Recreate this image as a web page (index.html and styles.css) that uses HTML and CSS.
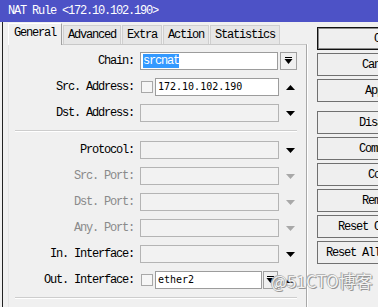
FILE: index.html
```html
<!DOCTYPE html>
<html lang="en">
<head>
    <meta charset="UTF-8">
    <title>NAT Rule &lt;172.10.102.190&gt;</title>
    <link rel="stylesheet" href="styles.css">
</head>
<body>
    <div class="titlebar">NAT Rule &lt;172.10.102.190&gt;</div>
    <div class="main">
        <div class="left">
            <div class="tabs">
                <div class="tab active">General</div>
                <div class="tab">Advanced</div>
                <div class="tab">Extra</div>
                <div class="tab">Action</div>
                <div class="tab">Statistics</div>
            </div>
            <div class="panel">
                <div class="row">
                    <div class="label">Chain:</div>
                    <div class="field chain"><span class="selected">srcnat</span></div>
                    <div class="drop"><svg width="9" height="8"><rect x="1" y="0" width="7" height="1"/><polygon points="0.5,2 8.5,2 4.5,7"/></svg></div>
                </div>
                <div class="row">
                    <div class="label">Src. Address:</div>
                    <div class="check"></div>
                    <div class="field white short">172.10.102.190</div>
                    <div class="arrow"><svg width="9" height="5"><polygon points="0,5 9,5 4.5,0"/></svg></div>
                </div>
                <div class="row">
                    <div class="label">Dst. Address:</div>
                    <div class="field"></div>
                    <div class="arrow"><svg width="9" height="5"><polygon points="0,0 9,0 4.5,5"/></svg></div>
                </div>

                <div class="sep"></div>

                <div class="row">
                    <div class="label">Protocol:</div>
                    <div class="field"></div>
                    <div class="arrow"><svg width="9" height="5"><polygon points="0,0 9,0 4.5,5"/></svg></div>
                </div>
                <div class="row off">
                    <div class="label">Src. Port:</div>
                    <div class="field"></div>
                    <div class="arrow"><svg width="9" height="5"><polygon points="0,0 9,0 4.5,5"/></svg></div>
                </div>
                <div class="row off">
                    <div class="label">Dst. Port:</div>
                    <div class="field"></div>
                    <div class="arrow"><svg width="9" height="5"><polygon points="0,0 9,0 4.5,5"/></svg></div>
                </div>
                <div class="row off">
                    <div class="label">Any. Port:</div>
                    <div class="field"></div>
                    <div class="arrow"><svg width="9" height="5"><polygon points="0,0 9,0 4.5,5"/></svg></div>
                </div>
                <div class="row">
                    <div class="label">In. Interface:</div>
                    <div class="field"></div>
                    <div class="arrow"><svg width="9" height="5"><polygon points="0,0 9,0 4.5,5"/></svg></div>
                </div>
                <div class="row">
                    <div class="label">Out. Interface:</div>
                    <div class="check"></div>
                    <div class="field white iface">ether2</div>
                    <div class="drop small"><svg width="9" height="8"><rect x="1" y="0" width="7" height="1"/><polygon points="0.5,2 8.5,2 4.5,7"/></svg></div>
                    <div class="arrow"><svg width="9" height="5"><polygon points="0,5 9,5 4.5,0"/></svg></div>
                </div>

                <div class="sep"></div>
            </div>
        </div>
        <div class="buttons">
            <button class="btn default">OK</button>
            <button class="btn">Cancel</button>
            <button class="btn">Apply</button>
            <button class="btn spaced">Disable</button>
            <button class="btn">Comment</button>
            <button class="btn">Copy</button>
            <button class="btn">Remove</button>
            <button class="btn">Reset Counters</button>
            <button class="btn">Reset All Counters</button>
        </div>
    </div>
    <div class="watermark">@51CTO博客</div>
</body>
</html>
```

FILE: styles.css
```css
body {
    margin: 0;
    width: 378px;
    height: 307px;
    overflow: hidden;
    background-color: #f0f0f0;
    font-family: 'Liberation Mono', monospace;
    font-size: 12px;
    letter-spacing: -1.2px;
    color: #000;
    position: relative;
}

.titlebar {
    height: 22px;
    line-height: 22px;
    background-color: #4d52c6;
    color: #fff;
    padding-left: 8px;
    white-space: nowrap;
}

.main {
    display: flex;
    margin-left: 2px;
    border-left: 1px solid #222;
    height: 285px;
}

.left {
    width: 304px;
    padding-left: 5px;
    box-sizing: border-box;
    flex-shrink: 0;
}

.tabs {
    display: flex;
    height: 22px;
    align-items: flex-end;
}

.tab {
    height: 19px;
    line-height: 18px;
    padding: 0 4px;
    margin-right: 1px;
    background-color: #e6e6e6;
    border: 1px solid #cfcfcf;
    border-bottom: none;
    box-sizing: border-box;
    white-space: nowrap;
}

.tab.active {
    height: 22px;
    line-height: 19px;
    padding: 0 5px;
    background-color: #f0f0f0;
    border-color: #fff #a0a0a0 #f0f0f0 #fff;
    position: relative;
    top: 1px;
}

.panel {
    border-top: 1px solid #c8c8c8;
    border-left: 1px solid #e4e4e4;
    border-right: 1px solid #a8a8a8;
    box-shadow: 1px 0 0 #fff;
    padding-top: 7px;
    height: 284px;
    box-sizing: border-box;
}

.row {
    display: flex;
    align-items: center;
    height: 18px;
    margin-bottom: 8px;
}

.label {
    width: 125px;
    margin-right: 6px;
    text-align: right;
    white-space: nowrap;
}

.row.off .label {
    color: #8a8a8a;
}

.field {
    width: 139px;
    height: 18px;
    border: 1px solid #b4b4b4;
    background-color: #f2f2f2;
    box-sizing: border-box;
    padding-left: 2px;
    line-height: 16px;
    white-space: nowrap;
    overflow: hidden;
}

.field.white {
    background-color: #fff;
    border-color: #9c9c9c;
    font-family: 'DejaVu Sans Mono', monospace;
    font-size: 10px;
    letter-spacing: 0;
}

.field.chain {
    width: 138px;
    background-color: #fff;
    border-color: #9c9c9c;
}

.field.short {
    width: 124px;
}

.field.iface {
    width: 107px;
}

.selected {
    display: inline-block;
    background-color: #3399ff;
    color: #fff;
    height: 14px;
    line-height: 14px;
    margin-top: 1px;
    vertical-align: top;
}

.check {
    width: 12px;
    height: 12px;
    border: 1px solid #a8a8a8;
    background-color: #f6f6f6;
    box-sizing: border-box;
    margin-left: 1px;
    margin-right: 2px;
}

.drop {
    width: 17px;
    height: 18px;
    margin-left: 2px;
    border: 1px solid #a0a0a0;
    background-color: #f0f0f0;
    box-sizing: border-box;
    display: flex;
    align-items: center;
    justify-content: center;
}

.drop.small {
    width: 15px;
    margin-left: 1px;
}

.arrow {
    width: 22px;
    display: flex;
    justify-content: center;
}

.row.off .arrow svg {
    fill: #a8a8a8;
}

.sep {
    height: 0;
    border-top: 1px solid #cdcdcd;
    border-bottom: 1px solid #fff;
    margin: 0 9px 9px 6px;
}

.buttons {
    display: flex;
    flex-direction: column;
    margin-left: 10px;
    padding-top: 5px;
    flex-shrink: 0;
}

.btn {
    width: 126px;
    height: 23px;
    margin-bottom: 3px;
    padding: 0;
    border: 1px solid #707070;
    background-color: #efefef;
    font-family: 'Liberation Mono', monospace;
    font-size: 12px;
    letter-spacing: -1.2px;
    color: #000;
    text-align: center;
    white-space: nowrap;
}

.btn.default {
    border-color: #111;
    box-shadow: inset 0 0 0 1px #8a8a8a;
}

.btn.spaced {
    margin-top: 6px;
}

.watermark {
    position: absolute;
    left: 271px;
    top: 268px;
    font-family: 'Noto Sans CJK SC', sans-serif;
    font-size: 17px;
    letter-spacing: 0;
    color: #f4f4f4;
    text-shadow: 0 0 1px #777, 1px 1px 0 #999, -1px -1px 0 #bbb;
    white-space: nowrap;
}
```
